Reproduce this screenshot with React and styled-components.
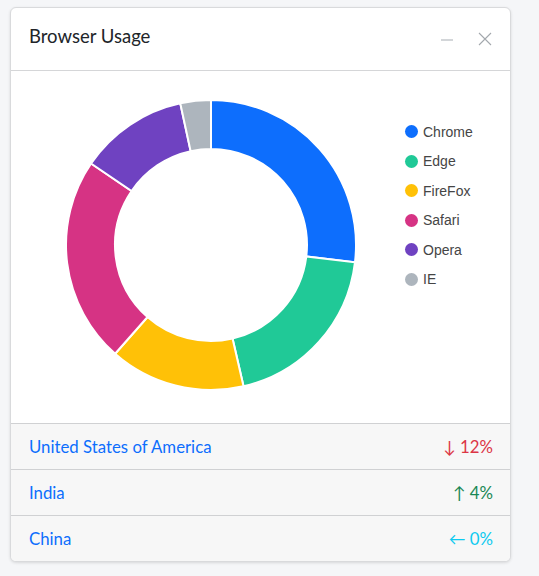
import React from "react";
import styled, { createGlobalStyle } from "styled-components";

const GlobalStyle = createGlobalStyle`
  body {
    margin: 0;
    background: #f5f6f8;
    font-family: "Lato", "Liberation Sans", sans-serif;
  }
`;

const Page = styled.div`
  padding: 7px 0 0 10px;
  width: 539px;
  height: 576px;
  box-sizing: border-box;
`;

const Card = styled.div`
  width: 501px;
  height: 555px;
  box-sizing: border-box;
  background: #ffffff;
  border: 1px solid #d9dadc;
  border-radius: 6px;
  box-shadow: 0 1px 3px rgba(0, 0, 0, 0.12);
  overflow: hidden;
  display: flex;
  flex-direction: column;
`;

const Header = styled.div`
  height: 63px;
  box-sizing: border-box;
  display: flex;
  align-items: center;
  padding: 0 18px 0 18px;
  border-bottom: 1px solid #d5d6d8;
`;

const Title = styled.h2`
  margin: 0;
  flex: 1;
  font-family: "Lato", "Liberation Sans", sans-serif;
  font-weight: 400;
  font-size: 18.5px;
  color: #212529;
  padding-bottom: 5px;
`;

const Tool = styled.button`
  background: none;
  border: none;
  padding: 0;
  margin-left: ${(p) => p.$gap || 0}px;
  width: 14px;
  height: 14px;
  display: flex;
  align-items: center;
  justify-content: center;
  cursor: pointer;
`;

const ChartBody = styled.div`
  height: 353px;
  display: flex;
  align-items: flex-start;
  padding: 28px 0 0 54px;
  box-sizing: border-box;
`;

const Legend = styled.ul`
  list-style: none;
  margin: 18px 0 0 48px;
  padding: 0;
`;

const LegendItem = styled.li`
  height: 29.5px;
  display: flex;
  align-items: center;
  font-family: "Liberation Sans", Arial, sans-serif;
  font-size: 14px;
  color: #454545;
`;

const Dot = styled.span`
  width: 13px;
  height: 13px;
  border-radius: 50%;
  background: ${(p) => p.$color};
  margin-right: 5px;
`;

const Row = styled.div`
  height: 46px;
  box-sizing: border-box;
  border-top: 1px solid #d0d1d3;
  background: #f7f7f7;
  display: flex;
  align-items: center;
  justify-content: space-between;
  padding: 0 17px 0 18px;
  font-size: 16.8px;
`;

const Country = styled.a`
  color: #0d6efd;
  text-decoration: none;
`;

const Change = styled.span`
  color: ${(p) => p.$color};
`;

const data = [
  { label: "Chrome", value: 26.9, color: "#0d6efd" },
  { label: "Edge", value: 19.5, color: "#20c997" },
  { label: "FireFox", value: 15.1, color: "#ffc107" },
  { label: "Safari", value: 23, color: "#d63384" },
  { label: "Opera", value: 12.1, color: "#6f42c1" },
  { label: "IE", value: 3.4, color: "#adb5bd" },
];

const rows = [
  { name: "United States of America", change: "↓ 12%", color: "#dc3545" },
  { name: "India", change: "↑ 4%", color: "#198754" },
  { name: "China", change: "← 0%", color: "#0dcaf0" },
];

const polar = (cx, cy, r, a) => [cx + r * Math.sin(a), cy - r * Math.cos(a)];

const Donut = ({ size = 292, inner = 96 }) => {
  const total = data.reduce((s, d) => s + d.value, 0);
  const c = size / 2;
  const outer = size / 2 - 1;
  let start = 0;
  return (
    <svg width={size} height={size} viewBox={`0 0 ${size} ${size}`}>
      {data.map((d) => {
        const end = start + (d.value / total) * Math.PI * 2;
        const large = end - start > Math.PI ? 1 : 0;
        const [x1, y1] = polar(c, c, outer, start);
        const [x2, y2] = polar(c, c, outer, end);
        const [x3, y3] = polar(c, c, inner, end);
        const [x4, y4] = polar(c, c, inner, start);
        const path = `M${x1} ${y1} A${outer} ${outer} 0 ${large} 1 ${x2} ${y2} L${x3} ${y3} A${inner} ${inner} 0 ${large} 0 ${x4} ${y4} Z`;
        start = end;
        return (
          <path key={d.label} d={path} fill={d.color} stroke="#fff" strokeWidth="2" />
        );
      })}
    </svg>
  );
};

export default function App() {
  return (
    <Page>
      <GlobalStyle />
      <Card>
        <Header>
          <Title>Browser Usage</Title>
          <Tool aria-label="minimize">
            <svg width="14" height="14" viewBox="0 0 14 14">
              <path d="M1 8h12" stroke="#c4c8cc" strokeWidth="1.5" />
            </svg>
          </Tool>
          <Tool aria-label="close" $gap={24}>
            <svg width="14" height="14" viewBox="0 0 14 14">
              <path d="M1 1l12 12M13 1L1 13" stroke="#a3a8ad" strokeWidth="1.1" />
            </svg>
          </Tool>
        </Header>
        <ChartBody>
          <Donut />
          <Legend>
            {data.map((d) => (
              <LegendItem key={d.label}>
                <Dot $color={d.color} />
                {d.label}
              </LegendItem>
            ))}
          </Legend>
        </ChartBody>
        {rows.map((r) => (
          <Row key={r.name}>
            <Country href="#">{r.name}</Country>
            <Change $color={r.color}>{r.change}</Change>
          </Row>
        ))}
      </Card>
    </Page>
  );
}
